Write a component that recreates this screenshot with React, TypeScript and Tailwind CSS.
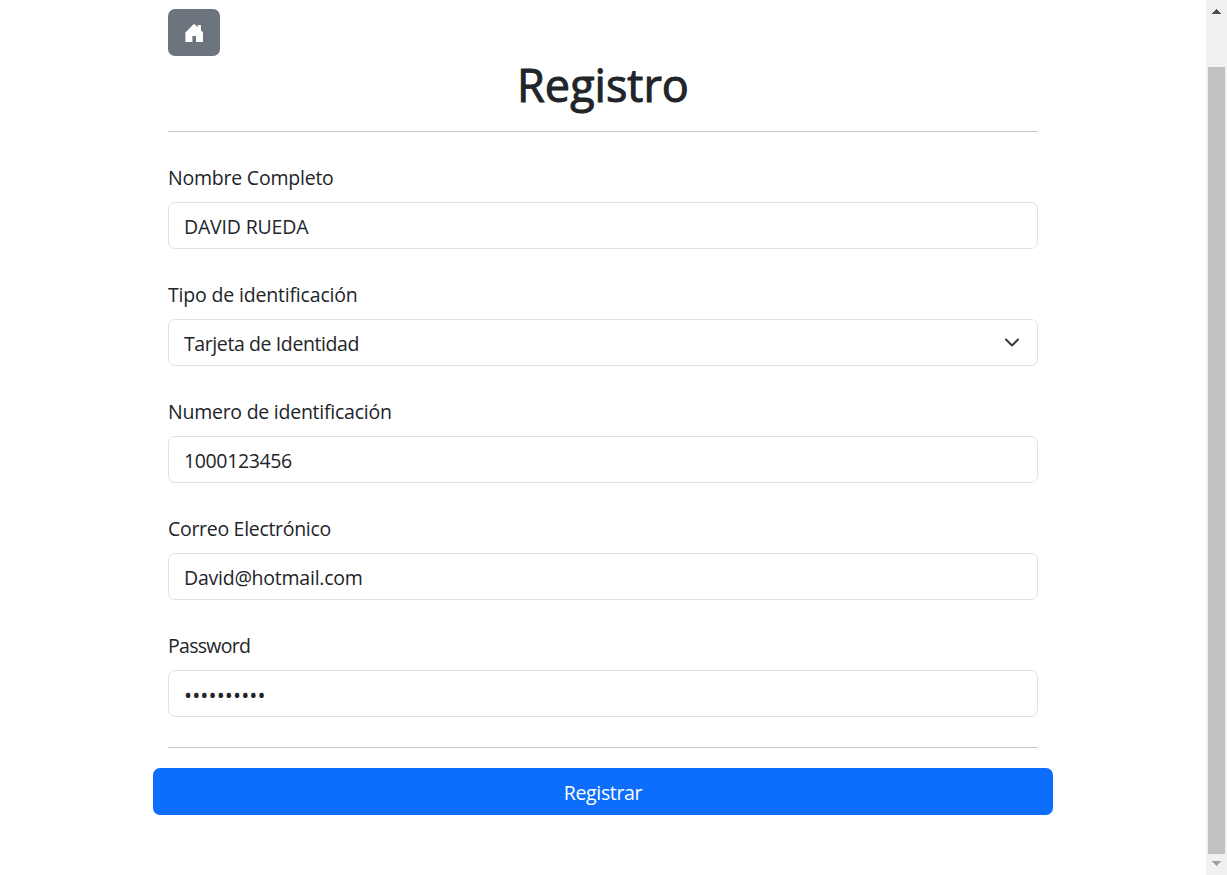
import React from "react";

const control =
  "block h-[47px] w-full appearance-none rounded-[7px] border border-[#dee2e6] bg-white px-[15px] text-[#212529] outline-none";

type FieldProps = {
  id: string;
  label: string;
  labelClass: string;
  children: React.ReactNode;
};

function Field({ id, label, labelClass, children }: FieldProps) {
  return (
    <div className="flex flex-col gap-[9px]">
      <label htmlFor={id} className="h-[30px] text-[19.5px] leading-[30px]">
        <span className={labelClass}>{label}</span>
      </label>
      {children}
    </div>
  );
}

function HouseIcon() {
  return (
    <svg width="20" height="20" viewBox="0 0 20 20" fill="currentColor">
      <path d="M1.4 18.4V9.4L9.3 1.5Q10.1 .7 10.9 1.5L13.7 4.3V2.6Q13.7 2 14.3 2H16.4Q17 2 17 2.6V7.3L19 9.4V18.4Q19 19 18.4 19H12V13.6Q12 13 11.4 13H9Q8.4 13 8.4 13.6V19H2Q1.4 19 1.4 18.4Z" />
    </svg>
  );
}

function ScrollBar() {
  return (
    <div className="flex w-[21px] shrink-0 flex-col items-center bg-[#f1f1f1]">
      <div className="flex h-[67px] justify-center pt-[9px]">
        <svg width="9" height="5" viewBox="0 0 9 5" shapeRendering="crispEdges">
          <path d="M4 0h1v1h1v1h1v1h1v1h1v1H0V4h1V3h1V2h1V1h1z" fill="#505050" />
        </svg>
      </div>
      <div className="h-[787px] w-[17px] bg-[#c1c1c1]" />
      <div className="flex h-[21px] justify-center pt-[7px]">
        <svg width="9" height="5" viewBox="0 0 9 5" shapeRendering="crispEdges">
          <path d="M0 0h9v1H8v1H7v1H6v1H5v1H4V4H3V3H2V2H1V1H0z" fill="#a3a3a3" />
        </svg>
      </div>
    </div>
  );
}

export default function App() {
  return (
    <div className="flex h-[875px] w-[1227px] overflow-hidden bg-white font-['Open_Sans','Noto_Sans',sans-serif] text-[#212529]">
      <main className="flex flex-1 flex-col items-center pt-[9px]">
        <form className="flex w-[900px] flex-col" onSubmit={(e) => e.preventDefault()}>
          <div className="flex flex-col px-[15px]">
            <button
              type="button"
              aria-label="Inicio"
              className="flex h-[47px] w-[52px] items-center justify-center rounded-[7px] bg-[#6c757d] pt-[1px] text-white"
            >
              <HouseIcon />
            </button>
            <h1 className="h-[60px] text-center text-[45px] leading-[58px] font-medium">
              <span className="tracking-[0px] [-webkit-text-stroke:1px_#212529]">Registro</span>
            </h1>
            <hr className="mt-[15px] border-t border-[#c7c8c9]" />
            <div className="mt-[31px] flex flex-col gap-[31px]">
              <Field id="nombre" label="Nombre Completo" labelClass="tracking-[-0.22px]">
                <input
                  id="nombre"
                  className={`${control} pt-[2px] text-[19.5px] tracking-[-0.18px]`}
                  defaultValue="DAVID RUEDA"
                />
              </Field>
              <Field id="tipo" label="Tipo de identificación" labelClass="tracking-[-0.18px]">
                <div className="relative">
                  <select id="tipo" className={`${control} pt-[3px] text-[19.5px] tracking-[-0.4px]`}>
                    <option>Tarjeta de Identidad</option>
                  </select>
                  <svg
                    className="pointer-events-none absolute top-[15px] right-[18px]"
                    width="16"
                    height="16"
                    viewBox="0 0 16 16"
                    fill="none"
                  >
                    <path
                      d="m2 5.5 6 6 6-6"
                      stroke="#343a40"
                      strokeWidth="2"
                      strokeLinecap="round"
                      strokeLinejoin="round"
                    />
                  </svg>
                </div>
              </Field>
              <Field id="numero" label="Numero de identificación" labelClass="tracking-[-0.25px]">
                <input
                  id="numero"
                  className={`${control} pt-[2px] text-[19.5px] tracking-[-0.36px]`}
                  defaultValue="1000123456"
                />
              </Field>
              <Field id="correo" label="Correo Electrónico" labelClass="tracking-[-0.3px]">
                <input
                  id="correo"
                  className={`${control} pt-[2px] text-[19.5px] tracking-[-0.24px]`}
                  defaultValue="David@hotmail.com"
                />
              </Field>
              <Field id="password" label="Password" labelClass="tracking-[-0.7px]">
                <input
                  id="password"
                  type="password"
                  className={`${control} pt-[2px] text-[21.5px] tracking-[0.08px]`}
                  defaultValue="1234567890"
                />
              </Field>
            </div>
            <hr className="mt-[30px] border-t border-[#c7c8c9]" />
          </div>
          <button
            type="submit"
            className="mt-[20px] h-[47px] rounded-[7px] bg-[#0d6efd] pt-[3px] text-[19.5px] text-white"
          >
            <span className="tracking-[-0.35px]">Registrar</span>
          </button>
        </form>
      </main>
      <ScrollBar />
    </div>
  );
}
